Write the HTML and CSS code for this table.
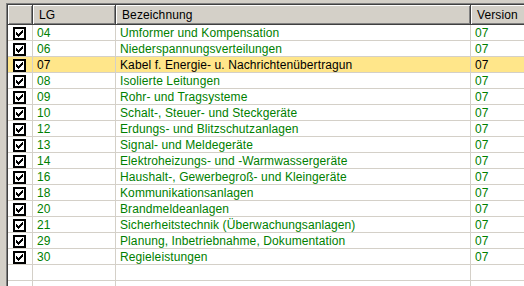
FILE: index.html
```html
<!DOCTYPE html>
<html>
<head>
<meta charset="utf-8">
<link rel="stylesheet" href="styles.css">
</head>
<body>
<svg class="defs" width="0" height="0">
  <symbol id="chk" viewBox="0 0 13 13">
    <rect x="0" y="0" width="13" height="13" fill="#000"/>
    <rect x="2" y="2" width="9" height="9" fill="#fff"/>
    <path d="M3 5h1v3h-1z M4 6h1v3h-1z M5 7h1v3h-1z M6 6h1v3h-1z M7 5h1v3h-1z M8 4h1v3h-1z M9 3h1v3h-1z" fill="#000"/>
  </symbol>
</svg>
<div class="frame">
<div class="inner">
  <div class="row head">
    <div class="c chk"></div>
    <div class="c">LG</div>
    <div class="c">Bezeichnung</div>
    <div class="c">Version</div>
  </div>
  <div class="row"><div class="c chk"><svg class="box"><use href="#chk"/></svg></div><div class="c">04</div><div class="c">Umformer und Kompensation</div><div class="c">07</div></div>
  <div class="row"><div class="c chk"><svg class="box"><use href="#chk"/></svg></div><div class="c">06</div><div class="c">Niederspannungsverteilungen</div><div class="c">07</div></div>
  <div class="row sel"><div class="c chk"><svg class="box"><use href="#chk"/></svg></div><div class="c">07</div><div class="c">Kabel f. Energie- u. Nachrichtenübertragun</div><div class="c">07</div></div>
  <div class="row"><div class="c chk"><svg class="box"><use href="#chk"/></svg></div><div class="c">08</div><div class="c">Isolierte Leitungen</div><div class="c">07</div></div>
  <div class="row"><div class="c chk"><svg class="box"><use href="#chk"/></svg></div><div class="c">09</div><div class="c">Rohr- und Tragsysteme</div><div class="c">07</div></div>
  <div class="row"><div class="c chk"><svg class="box"><use href="#chk"/></svg></div><div class="c">10</div><div class="c">Schalt-, Steuer- und Steckgeräte</div><div class="c">07</div></div>
  <div class="row"><div class="c chk"><svg class="box"><use href="#chk"/></svg></div><div class="c">12</div><div class="c">Erdungs- und Blitzschutzanlagen</div><div class="c">07</div></div>
  <div class="row"><div class="c chk"><svg class="box"><use href="#chk"/></svg></div><div class="c">13</div><div class="c">Signal- und Meldegeräte</div><div class="c">07</div></div>
  <div class="row"><div class="c chk"><svg class="box"><use href="#chk"/></svg></div><div class="c">14</div><div class="c">Elektroheizungs- und -Warmwassergeräte</div><div class="c">07</div></div>
  <div class="row"><div class="c chk"><svg class="box"><use href="#chk"/></svg></div><div class="c">16</div><div class="c">Haushalt-, Gewerbegroß- und Kleingeräte</div><div class="c">07</div></div>
  <div class="row"><div class="c chk"><svg class="box"><use href="#chk"/></svg></div><div class="c">18</div><div class="c">Kommunikationsanlagen</div><div class="c">07</div></div>
  <div class="row"><div class="c chk"><svg class="box"><use href="#chk"/></svg></div><div class="c">20</div><div class="c">Brandmeldeanlagen</div><div class="c">07</div></div>
  <div class="row"><div class="c chk"><svg class="box"><use href="#chk"/></svg></div><div class="c">21</div><div class="c">Sicherheitstechnik (Überwachungsanlagen)</div><div class="c">07</div></div>
  <div class="row"><div class="c chk"><svg class="box"><use href="#chk"/></svg></div><div class="c">29</div><div class="c">Planung, Inbetriebnahme, Dokumentation</div><div class="c">07</div></div>
  <div class="row"><div class="c chk"><svg class="box"><use href="#chk"/></svg></div><div class="c">30</div><div class="c">Regieleistungen</div><div class="c">07</div></div>
  <div class="row"><div class="c chk"></div><div class="c"></div><div class="c"></div><div class="c"></div></div>
  <div class="row"><div class="c chk"></div><div class="c"></div><div class="c"></div><div class="c"></div></div>
</div>
</div>
</body>
</html>
```
FILE: styles.css
```css
html, body {
  margin: 0;
  padding: 0;
  background: #d4d0c8;
  overflow: hidden;
  height: 286px;
}
.defs {
  position: absolute;
  width: 0;
  height: 0;
}
.frame {
  margin: 3px 0 0 6px;
  border-top: 1px solid #808080;
  border-left: 1px solid #808080;
  height: 283px;
}
.inner {
  border-top: 1px solid #404040;
  border-left: 1px solid #404040;
  background: #fff;
  height: 282px;
  overflow: hidden;
  font-family: "Liberation Sans", Arial, sans-serif;
  font-size: 12px;
  letter-spacing: 0.1px;
  color: #008000;
}
.row {
  display: grid;
  grid-template-columns: 25px 83px 355px 60px;
  height: 16px;
}
.row .c {
  box-sizing: border-box;
  border-right: 1px solid #d4d0c8;
  border-bottom: 1px solid #d4d0c8;
  padding-left: 4px;
  line-height: 16px;
  white-space: nowrap;
  overflow: hidden;
}
.row .chk {
  padding-left: 5px;
  padding-top: 2px;
}
.row.sel {
  background: #ffe68a;
  color: #000;
}
.row.head {
  height: 20px;
  color: #000;
}
.row.head .c {
  background: #d4d0c8;
  border-right: 1px solid #404040;
  border-bottom: 1px solid #404040;
  box-shadow: inset 1px 1px #fff, inset -1px -1px #808080;
  line-height: 20px;
  padding-left: 6px;
  padding-top: 0;
}
.box {
  display: block;
  width: 13px;
  height: 13px;
  shape-rendering: crispEdges;
}
```
